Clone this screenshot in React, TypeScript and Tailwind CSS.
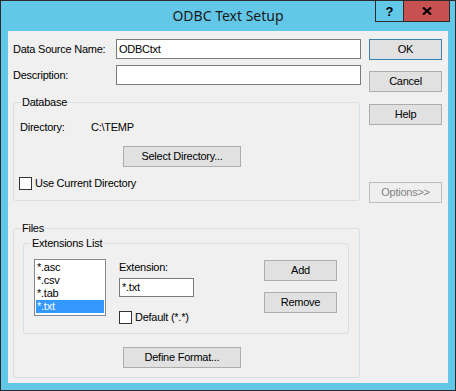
import React from 'react';

type BtnProps = {
  label: string;
  w?: string;
  def?: boolean;
  disabled?: boolean;
  className?: string;
};

// classic win8 push button
const Btn = ({ label, w = 'w-[73px]', def, disabled, className = '' }: BtnProps) => (
  <div
    className={`${w} h-[21px] shrink-0 flex items-center justify-center border ${
      def ? 'border-[#3C7FB1]' : disabled ? 'border-[#BFBFBF]' : 'border-[#ADADAD]'
    } ${disabled ? 'bg-[#EFEFEF] text-[#838383]' : 'bg-[#E1E1E1] text-black'} ${className}`}
  >
    {label}
  </div>
);

const Check = ({ label, className = '' }: { label: string; className?: string }) => (
  <div className={`flex items-center ${className}`}>
    <div className="w-[13px] h-[13px] border border-[#333333] bg-white shrink-0" />
    <span className="ml-[3px]">{label}</span>
  </div>
);

const Field = ({ w, h = 'h-[20px]', value, className = '' }: { w: string; h?: string; value?: string; className?: string }) => (
  <div className={`${w} ${h} shrink-0 border border-[#7A7A7A] bg-white flex items-center pl-[2px] ${className}`}>
    {value}
  </div>
);

const extensions = ['*.asc', '*.csv', '*.tab', '*.txt'];

export default function App() {
  return (
    <div className="w-[456px] h-[391px] border border-[#2B2B2B] bg-[#63C8E8] flex flex-col font-['Liberation_Sans',Arial,sans-serif] text-[11px] leading-[13px] tracking-[-0.25px] text-black">
      {/* Title bar */}
      <div className="h-[30px] relative flex items-center justify-center shrink-0">
        <span className="font-['Noto_Sans',sans-serif] text-[14px] tracking-normal text-[#1A1A1A] mt-[-1px]">
          ODBC Text Setup
        </span>
        <div className="absolute top-[-1px] left-[374px] flex h-[22px]">
          <div className="w-[29px] h-full border border-[#2B2B2B] flex items-center justify-center font-bold text-[13px] tracking-normal">
            ?
          </div>
          <div className="w-[46px] h-full border border-l-0 border-[#2B2B2B] bg-[#C75050] flex items-center justify-center">
            <svg width="10" height="8" viewBox="0 0 10 8">
              <path d="M1 0.5 L9 7.5 M9 0.5 L1 7.5" stroke="#000" strokeWidth="2.2" />
            </svg>
          </div>
        </div>
      </div>

      {/* Client area */}
      <div className="mx-[7px] h-[352px] bg-[#F0F0F0] flex shrink-0">
        {/* Left column */}
        <div className="ml-[5px] w-[348px] flex flex-col">
          <div className="mt-[8px] flex items-center">
            <span className="w-[103px]">Data Source Name:</span>
            <Field w="w-[245px]" value="ODBCtxt" />
          </div>
          <div className="mt-[6px] flex items-center">
            <span className="w-[103px]">Description:</span>
            <Field w="w-[245px]" />
          </div>

          {/* Database */}
          <fieldset className="mt-[11px] w-[347px] border border-[#D5DFE5] rounded-[3px]">
            <legend className="ml-[7px] px-[1px]">Database</legend>
            <div className="flex flex-col">
              <div className="mt-[12px] flex pl-[6px]">
                <span className="w-[71px]">Directory:</span>
                <span>C:\TEMP</span>
              </div>
              <Btn label="Select Directory..." w="w-[118px]" className="mt-[12px] ml-[109px]" />
              <Check label="Use Current Directory" className="mt-[10px] ml-[5px] mb-[10px]" />
            </div>
          </fieldset>

          {/* Files */}
          <fieldset className="mt-[21px] w-[347px] border border-[#D5DFE5] rounded-[3px]">
            <legend className="ml-[7px] px-[1px]">Files</legend>
            <div className="flex flex-col">
              <fieldset className="mt-[2px] ml-[9px] w-[326px] border border-[#D5DFE5] rounded-[3px]">
                <legend className="ml-[7px] px-[1px]">Extensions List</legend>
                <div className="flex items-start">
                  <div className="mt-[9px] ml-[10px] w-[72px] h-[57px] border border-[#828790] bg-white p-[1px] shrink-0">
                    {extensions.map((ext) => (
                      <div
                        key={ext}
                        className={`h-[13px] pl-[1px] ${ext === '*.txt' ? 'bg-[#3399FF] text-white' : ''}`}
                      >
                        {ext}
                      </div>
                    ))}
                  </div>
                  <div className="ml-[13px] mt-[11px] flex flex-col">
                    <span>Extension:</span>
                    <Field w="w-[75px]" h="h-[19px]" value="*.txt" className="mt-[4px]" />
                    <Check label="Default (*.*)" className="mt-[14px] mb-[9px]" />
                  </div>
                  <div className="ml-[70px] mt-[10px] flex flex-col">
                    <Btn label="Add" />
                    <Btn label="Remove" className="mt-[11px]" />
                  </div>
                </div>
              </fieldset>
              <Btn label="Define Format..." w="w-[118px]" className="mt-[13px] ml-[109px] mb-[9px]" />
            </div>
          </fieldset>
        </div>

        {/* Right column */}
        <div className="ml-[8px] w-[73px] flex flex-col">
          <Btn label="OK" def className="mt-[8px]" />
          <Btn label="Cancel" className="mt-[11px]" />
          <Btn label="Help" className="mt-[12px]" />
          <Btn label="Options>>" disabled className="mt-[57px]" />
        </div>
      </div>
    </div>
  );
}
